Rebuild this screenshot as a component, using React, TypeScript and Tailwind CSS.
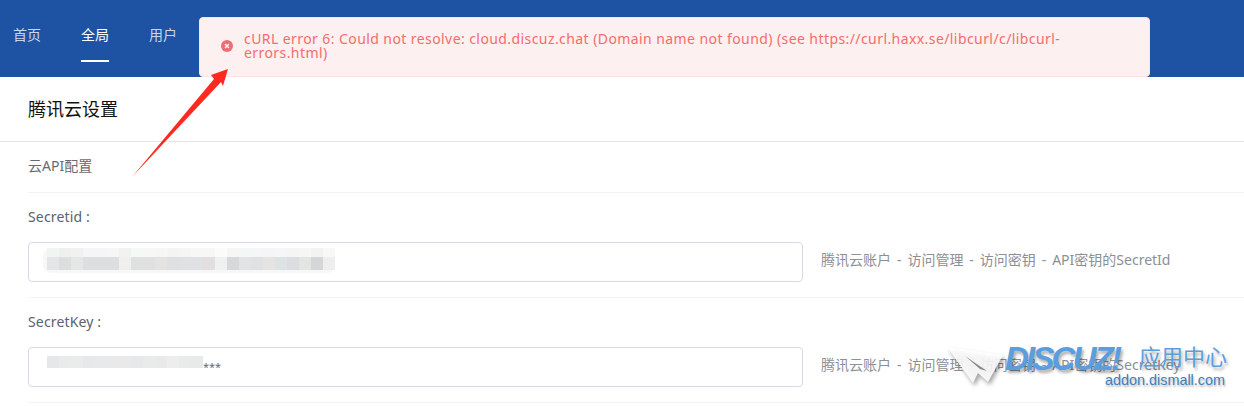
const font = "font-['Noto_Sans','Noto_Sans_CJK_SC',sans-serif]";

const mosaic1 = ["#e4e5e6","#dcdddf","#e6e6e6","#dcdee0","#dddedf","#dddee0","#f0efee","#dfe0e0","#dfe0df","#e4e3e2","#dfe0e1","#dfe1e3","#e0e1e2","#e3dfdf","#eff1f0","#d7d8d9","#e2e3e4","#dfe2e4","#e6e4e3","#dfe2e4","#dcdddf","#e4e5e3","#d5d6d7","#eeeeee"];
const mosaic1Top = ["#f2f3f3","#eef0f0","#f1f1f1","#f3f5f6","#f4f5f6","#f6f6f6","#f1f3f3","#f6f7f7","#f7f7f6","#f6f6f5","#f3f4f4","#f5f5f6","#f7f7f7","#f7f7f7","#fbfbfb","#f6f6f7","#f5f6f6","#f5f6f7","#f6f5f5","#f5f6f7","#f4f5f5","#f5f6f5","#f2f3f3","#f8f8f8"];
const mosaic2 = ["#e6e7e8","#e9eaea","#eaebeb","#e7e8e9","#e8e9ea","#e9e9ea","#e8e9ea","#e7e8e9","#e9eaea","#e8e9e9","#ecedec","#e9eaea","#e8e9e9"];

function Field({ label, hint, children }: { label: string; hint: string; children: React.ReactNode }) {
  return (
    <div className="ml-[28px] h-[105px] border-b border-[#f3f3f6] pt-[14px]">
      <div className="h-[20px] text-[14px] leading-[20px] tracking-[0.15px] text-[#5a6270]">{label}</div>
      <div className="mt-[15px] flex items-center">
        <div className="relative h-[40px] w-[775px] shrink-0 overflow-hidden rounded-[4px] border border-[#d9d8e8] bg-white">{children}</div>
        <div className="mb-[5px] ml-[18px] whitespace-nowrap text-[14px] text-[#8c8f96] [word-spacing:2.3px]">{hint}</div>
      </div>
    </div>
  );
}

export default function App() {
  return (
    <div className={`relative h-[406px] w-[1244px] overflow-hidden bg-white ${font}`}>
      <header className="flex h-[77px] items-start gap-[40px] bg-[#1e53a3] pl-[13px] pt-[25px] text-[14px]">
        <div className="h-[35px] w-[28px] whitespace-nowrap leading-[20px] text-[#c9d6ea]">首页</div>
        <div className="h-[37px] w-[28px] whitespace-nowrap border-b-2 border-white leading-[20px] text-white">全局</div>
        <div className="h-[35px] w-[28px] whitespace-nowrap leading-[20px] text-[#c9d6ea]">用户</div>
      </header>

      <div className="absolute left-[199px] top-[17px] flex h-[60px] w-[951px] items-center rounded-[4px] border border-[#fde2e2] bg-[#fdf0f0] pb-[2px] pl-[21px] pr-[60px]">
        <span className="mr-[11px] flex h-[12px] w-[12px] shrink-0 items-center justify-center rounded-full bg-[#ee6d73]">
          <svg width="6" height="6" viewBox="0 0 6 6"><path d="M1 1l4 4M5 1L1 5" stroke="#fff" strokeWidth="1.2" /></svg>
        </span>
        <p className="text-[14px] leading-[14px] tracking-[0.42px] text-[#f56c6c]">
          cURL error 6: Could not resolve: cloud.discuz.chat (Domain name not found) (see https://curl.haxx.se/libcurl/c/libcurl-errors.html)
        </p>
      </div>

      <div className="flex h-[65px] items-center border-b border-[#e6e6e6] pl-[28px] text-[18px] text-[#111111]">腾讯云设置</div>
      <div className="ml-[28px] flex h-[51px] items-center border-b border-[#f3f3f6] pb-[4px] text-[14px] text-[#666a72]">云API配置</div>

      <Field label="Secretid :" hint="腾讯云账户 - 访问管理 - 访问密钥 - API密钥的SecretId">
        <div className="absolute left-[14px] top-[5px] flex flex-col rounded-[8px] bg-[#f6f7f7] pl-[4px] blur-[0.4px]">
          <div className="flex h-[9px]">
            {mosaic1Top.map((c, i) => <span key={i} className="h-full w-[12px]" style={{ background: c }} />)}
          </div>
          <div className="flex h-[13px]">
            {mosaic1.map((c, i) => <span key={i} className="h-full w-[12px]" style={{ background: c }} />)}
          </div>
          <div className="h-[3px]" />
        </div>
      </Field>

      <Field label="SecretKey :" hint="腾讯云账户 - 访问管理 - 访问密钥 - API密钥的SecretKey">
        <div className="absolute left-[18px] top-[8px] flex h-[12px] items-center">
          <div className="flex h-full">
            {mosaic2.map((c, i) => <span key={i} className="h-full w-[12px]" style={{ background: c }} />)}
          </div>
          <span className="translate-y-[5px] text-[11px] leading-[12px] text-[#606c80]">***</span>
        </div>
      </Field>

      {/* red arrow */}
      <svg className="absolute left-[125px] top-[65px]" width="110" height="115" viewBox="0 0 110 115">
        <path d="M7 112 L89 14 L86 10 L103 4 L98 21 L96 17 Z" fill="#ff2a1f" />
      </svg>

      {/* watermark */}
      <div className="absolute left-[945px] top-[344px] h-[62px] w-[299px]">
        <svg className="absolute left-0 top-0 drop-shadow-[2px_3px_2px_rgba(0,0,0,0.4)]" width="62" height="44" viewBox="0 0 62 44">
          <path d="M2 3 L58 11 L43 38 L33 29 L28 39 Z" fill="#ffffff" fillOpacity="0.88" />
          <path d="M20 12 L42 27 L35 25 Z" fill="#8a8a8a" />
        </svg>
        <span className="absolute left-[60px] top-[-1px] font-['Liberation_Sans'] text-[33px] font-bold italic leading-[32px] tracking-[-2.8px] text-[#5a9ede] [text-shadow:2px_3px_3px_rgba(0,0,0,0.3)]">DISCUZ!</span>
        <span className="absolute left-[194px] top-[-2px] text-[22px] leading-[28px] text-[#5a9ede] [text-shadow:2px_3px_3px_rgba(0,0,0,0.3)]">应用中心</span>
        <span className="absolute left-[160px] top-[27px] font-['Liberation_Sans'] text-[14.4px] leading-[18px] text-[#3f7fc0] [text-shadow:1px_2px_2px_rgba(0,0,0,0.3)]">addon.dismall.com</span>
      </div>
    </div>
  );
}
